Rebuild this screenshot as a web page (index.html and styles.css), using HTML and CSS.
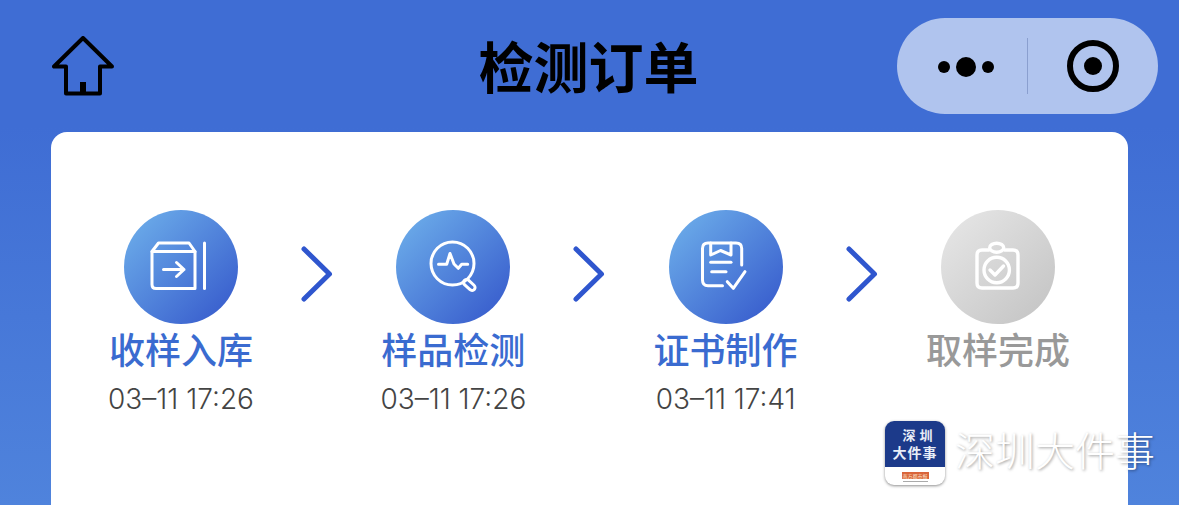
FILE: index.html
```html
<!DOCTYPE html>
<html lang="zh-CN">
  <head>
    <meta charset="UTF-8" />
    <meta name="viewport" content="width=device-width, initial-scale=1.0" />
    <title>检测订单</title>
    <link rel="stylesheet" href="styles.css">
  </head>

  <body>
    <div class="nav">
      <div class="nav-left">
        <svg class="home-icon" viewBox="0 0 62 60" fill="none" stroke="#000" stroke-width="4" stroke-linejoin="round">
          <path d="M31 2 L2 30.500 H14 V57.500 H48 V30.500 H60 Z" />
          <path d="M31 46 V57" stroke-width="6" />
        </svg>
      </div>
      <h1 class="nav-title">检测订单</h1>
      <div class="capsule">
        <div class="capsule-side capsule-dots">
          <span class="dot"></span>
          <span class="dot dot-big"></span>
          <span class="dot"></span>
        </div>
        <div class="capsule-line"></div>
        <div class="capsule-side">
          <span class="target"><span class="target-in"></span></span>
        </div>
      </div>
    </div>

    <div class="card">
      <div class="steps">
        <div class="step">
          <div class="step-circle">
            <svg class="step-icon" viewBox="0 0 114 114" fill="none" stroke="#fff" stroke-width="3" stroke-linecap="round" stroke-linejoin="round">
              <path d="M34.500 33 H65 L71 41.500 V78.500 H32 Q28 78.500 28 74.500 V41.500 Z" />
              <path d="M28 41.500 H71" />
              <path d="M80.500 33 V78.500" />
              <path d="M39.500 59.500 H60 M52.500 52.500 L60 59.500 L52.500 66.500" />
            </svg>
          </div>
          <div class="step-name">收样入库</div>
          <div class="step-time">03–11 17:26</div>
        </div>
        <svg class="arrow" viewBox="0 0 32 56" fill="none" stroke="#2f56ce" stroke-width="5" stroke-linecap="round" stroke-linejoin="round">
          <path d="M3 3 L28.500 28 L3 53" />
        </svg>
        <div class="step">
          <div class="step-circle">
            <svg class="step-icon" viewBox="0 0 114 114" fill="none" stroke="#fff" stroke-width="3" stroke-linecap="round" stroke-linejoin="round">
              <circle cx="56.500" cy="53.500" r="21.500" />
              <path d="M42.500 54.300 H50.700 L54 43.500 L58 54 L62.300 58.300 L65.700 54.300 H71.700" />
              <rect x="66.500" y="72" width="13.500" height="6" rx="3" transform="rotate(42 73.300 75)" />
            </svg>
          </div>
          <div class="step-name">样品检测</div>
          <div class="step-time">03–11 17:26</div>
        </div>
        <svg class="arrow" viewBox="0 0 32 56" fill="none" stroke="#2f56ce" stroke-width="5" stroke-linecap="round" stroke-linejoin="round">
          <path d="M3 3 L28.500 28 L3 53" />
        </svg>
        <div class="step">
          <div class="step-circle">
            <svg class="step-icon" viewBox="0 0 114 114" fill="none" stroke="#fff" stroke-width="3" stroke-linecap="round" stroke-linejoin="round">
              <path d="M72.700 55 V38.500 Q72.700 33 67 33 H39 Q33.500 33 33.500 38.500 V70 Q33.500 75.700 39 75.700 H53.500" />
              <path d="M41.700 33 V45 L51.500 40.500 L62 45 V33" />
              <path d="M41.700 52.300 H62" />
              <path d="M42.700 61.700 H57" />
              <path d="M58.300 71.700 L64.300 78.300 L76 61.700" />
            </svg>
          </div>
          <div class="step-name">证书制作</div>
          <div class="step-time">03–11 17:41</div>
        </div>
        <svg class="arrow" viewBox="0 0 32 56" fill="none" stroke="#2f56ce" stroke-width="5" stroke-linecap="round" stroke-linejoin="round">
          <path d="M3 3 L28.500 28 L3 53" />
        </svg>
        <div class="step step-todo">
          <div class="step-circle">
            <svg class="step-icon" viewBox="0 0 114 114" fill="none" stroke="#fff" stroke-width="3.400" stroke-linecap="round" stroke-linejoin="round">
              <path d="M48 40 H41 Q36 40 36 45 V73 Q36 78 41 78 H72 Q77 78 77 73 V45 Q77 40 72 40 H63.500" />
              <ellipse cx="55.700" cy="37.700" rx="7" ry="4.500" />
              <circle cx="55.700" cy="60" r="12.700" />
              <path d="M49 60 L54 65 L62.500 56" />
            </svg>
          </div>
          <div class="step-name">取样完成</div>
        </div>
      </div>
    </div>

    <div class="mark">
      <div class="mark-logo">
        <div class="mark-logo-top">
          <span class="mark-l1">深圳</span>
          <span class="mark-l2">大件事</span>
        </div>
        <div class="mark-logo-bottom">
          <span class="mark-paper">南方都市报</span>
          <span class="mark-tiny"></span>
        </div>
      </div>
      <span class="mark-text">深圳大件事</span>
    </div>
  </body>
</html>
```

FILE: styles.css
```css
* {
  box-sizing: border-box;
}

html,
body {
  height: 505px;
  overflow: hidden;
}

body {
  margin: 0;
  position: relative;
  font-family: "Noto Sans CJK SC", "Noto Sans", sans-serif;
  background: linear-gradient(180deg, #3f6dd4 0%, #3f6dd4 25%, #4f83dc 100%);
}

.nav {
  height: 132px;
  padding: 18px 21px 18px 19px;
  display: grid;
  grid-template-columns: minmax(0, 1fr) auto minmax(0, 1fr);
  align-items: start;
}

.nav-left {
  padding: 18px 0 0 33px;
}

.home-icon {
  display: block;
  width: 62px;
  height: 60px;
}

.nav-title {
  margin: 0;
  height: 96px;
  font-size: 55px;
  line-height: 92px;
  font-weight: 700;
  color: #000;
}

.capsule {
  justify-self: end;
  width: 261px;
  height: 96px;
  border-radius: 48px;
  background: #b0c4ee;
  display: flex;
  align-items: center;
}

.capsule-side {
  flex: 1;
  display: flex;
  align-items: center;
  justify-content: center;
  gap: 6px;
}

.capsule-dots {
  flex: none;
  width: 130px;
  padding: 1px 0 0 8px;
}

.capsule-line {
  width: 1px;
  height: 56px;
  background: #8a9fcf;
}

.dot {
  width: 12px;
  height: 12px;
  border-radius: 50%;
  background: #000;
}

.dot-big {
  width: 20px;
  height: 20px;
}

.target {
  width: 52px;
  height: 52px;
  border: 6px solid #000;
  border-radius: 50%;
  display: flex;
  align-items: center;
  justify-content: center;
}

.target-in {
  width: 18px;
  height: 18px;
  border-radius: 50%;
  background: #000;
}

.card {
  margin: 0 51px;
  height: 373px;
  padding: 78px 30px 0;
  background: #fff;
  border-radius: 16px 16px 0 0;
}

.steps {
  display: flex;
  align-items: flex-start;
}

.step {
  width: 200px;
  flex: none;
  display: flex;
  flex-direction: column;
  align-items: center;
}

.step-circle {
  width: 114px;
  height: 114px;
  border-radius: 50%;
  background: linear-gradient(135deg, #70b3ec 0%, #3355ca 100%);
}

.step-todo .step-circle {
  background: linear-gradient(135deg, #e8e8e8 0%, #c2c2c2 100%);
}

.step-icon {
  display: block;
  width: 114px;
  height: 114px;
}

.step-name {
  margin-top: -2px;
  font-size: 36px;
  line-height: 52px;
  font-weight: 500;
  color: #3a6bd0;
}

.step-todo .step-name {
  color: #999;
}

.step-time {
  margin-top: 8px;
  font-family: Inter, "Liberation Sans", sans-serif;
  font-size: 28px;
  line-height: 34px;
  font-weight: 300;
  color: #444;
  white-space: nowrap;
}

.arrow {
  flex: none;
  width: 32px;
  height: 56px;
  margin: 36px 20.170px 0;
}

/* watermark sits over the card corner */
.mark {
  position: absolute;
  left: 885px;
  top: 421px;
  display: flex;
  align-items: center;
  gap: 10px;
}

.mark-logo {
  width: 60px;
  height: 64px;
  border-radius: 9px;
  overflow: hidden;
  background: #fff;
  box-shadow: 0 1px 3px rgba(0, 0, 0, 0.45);
  display: flex;
  flex-direction: column;
}

.mark-logo-top {
  height: 46px;
  background: #1c3a8a;
  color: #e8edf7;
  font-weight: 700;
  display: flex;
  flex-direction: column;
  align-items: center;
}

.mark-l1 {
  margin: 7px 0 0 9px;
  font-size: 13px;
  line-height: 14px;
  letter-spacing: 4px;
}

.mark-l2 {
  margin-top: 3px;
  font-size: 14px;
  line-height: 15px;
  letter-spacing: 1px;
}

.mark-logo-bottom {
  flex: 1;
  display: flex;
  flex-direction: column;
  align-items: center;
  padding-top: 5px;
}

.mark-paper {
  width: 27px;
  height: 7px;
  background: #d9643a;
  color: #fbe3c8;
  font-size: 5px;
  line-height: 7px;
  text-align: center;
}

.mark-tiny {
  width: 25px;
  height: 1px;
  margin-top: 2px;
  background: #aaa;
}

.mark-text {
  margin-top: -8px;
  font-size: 40px;
  line-height: 56px;
  font-weight: 300;
  color: #fff;
  white-space: nowrap;
  text-shadow: 1px 1px 3px rgba(0, 0, 0, 0.4);
}
```
